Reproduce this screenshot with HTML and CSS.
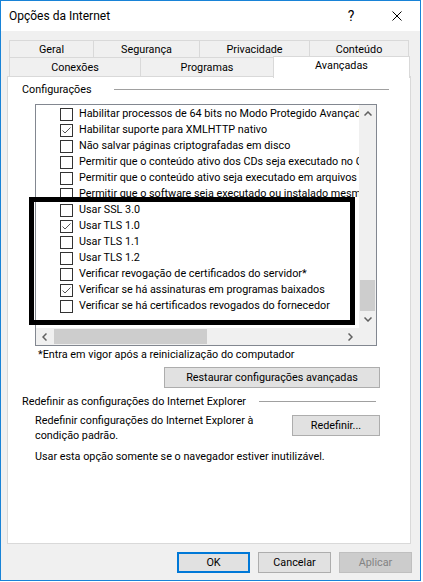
FILE: index.html
```html
<!DOCTYPE html>
<html lang="pt-BR">

<head>
  <meta charset="UTF-8" />
  <title>Opções da Internet</title>
  <link rel="stylesheet" href="styles.css">
</head>

<body>

  <div class="window">
    <!-- barra de título -->
    <div class="titlebar">
      <span class="title">Opções da Internet</span>
      <span class="title-btn help">?</span>
      <span class="title-btn">
        <svg width="10" height="10" viewBox="0 0 10 10"><path d="M0.5 0.5L9.5 9.5M9.5 0.5L0.5 9.5" stroke="#000" stroke-width="1" fill="none"/></svg>
      </span>
    </div>

    <div class="content">
      <!-- abas -->
      <div class="tabs">
        <div class="tab-row row1">
          <div class="tab tab-geral">Geral</div>
          <div class="tab tab-seguranca">Segurança</div>
          <div class="tab tab-privacidade">Privacidade</div>
          <div class="tab tab-conteudo">Conteúdo</div>
        </div>
        <div class="tab-row row2">
          <div class="tab tab-conexoes">Conexões</div>
          <div class="tab tab-programas">Programas</div>
          <div class="tab tab-avancadas active">Avançadas</div>
        </div>
      </div>

      <div class="panel">
        <div class="group-title group-config">
          <span>Configurações</span>
          <div class="group-line"></div>
        </div>

        <div class="listbox">
          <div class="list-main">
            <div class="list-items">
              <div class="item"><span class="check"></span>Habilitar processos de 64 bits no Modo Protegido Avançado*</div>
              <div class="item"><span class="check checked"><svg width="11" height="11" viewBox="0 0 11 11"><path d="M1.5 5.5L4 8L9.5 2.5" stroke="#555" stroke-width="1" fill="none"/></svg></span>Habilitar suporte para XMLHTTP nativo</div>
              <div class="item"><span class="check"></span>Não salvar páginas criptografadas em disco</div>
              <div class="item"><span class="check"></span>Permitir que o conteúdo ativo dos CDs seja executado no Computador Local*</div>
              <div class="item"><span class="check"></span>Permitir que o conteúdo ativo seja executado em arquivos do Computador Local*</div>
              <div class="item"><span class="check"></span>Permitir que o software seja executado ou instalado mesmo se a assinatura for inválida</div>
              <div class="item"><span class="check"></span>Usar SSL 3.0</div>
              <div class="item"><span class="check checked"><svg width="11" height="11" viewBox="0 0 11 11"><path d="M1.5 5.5L4 8L9.5 2.5" stroke="#555" stroke-width="1" fill="none"/></svg></span>Usar TLS 1.0</div>
              <div class="item"><span class="check"></span>Usar TLS 1.1</div>
              <div class="item"><span class="check"></span>Usar TLS 1.2</div>
              <div class="item"><span class="check"></span>Verificar revogação de certificados do servidor*</div>
              <div class="item"><span class="check checked"><svg width="11" height="11" viewBox="0 0 11 11"><path d="M1.5 5.5L4 8L9.5 2.5" stroke="#555" stroke-width="1" fill="none"/></svg></span>Verificar se há assinaturas em programas baixados</div>
              <div class="item"><span class="check"></span>Verificar se há certificados revogados do fornecedor</div>
            </div>
            <!-- barra de rolagem vertical -->
            <div class="vscroll">
              <div class="arrow-btn">
                <svg width="8" height="5" viewBox="0 0 8 5"><path d="M0.5 4.5L4 1L7.5 4.5" stroke="#606060" stroke-width="1.5" fill="none"/></svg>
              </div>
              <div class="vtrack"><div class="vthumb"></div></div>
              <div class="arrow-btn">
                <svg width="8" height="5" viewBox="0 0 8 5"><path d="M0.5 0.5L4 4L7.5 0.5" stroke="#606060" stroke-width="1.5" fill="none"/></svg>
              </div>
            </div>
          </div>
          <!-- barra de rolagem horizontal -->
          <div class="hscroll">
            <div class="hbar">
              <div class="arrow-btn">
                <svg width="5" height="8" viewBox="0 0 5 8"><path d="M4.5 0.5L1 4L4.5 7.5" stroke="#606060" stroke-width="1.5" fill="none"/></svg>
              </div>
              <div class="htrack"><div class="hthumb"></div></div>
              <div class="arrow-btn">
                <svg width="5" height="8" viewBox="0 0 5 8"><path d="M0.5 0.5L4 4L0.5 7.5" stroke="#606060" stroke-width="1.5" fill="none"/></svg>
              </div>
            </div>
            <div class="corner"></div>
          </div>
          <!-- destaque -->
          <div class="highlight"></div>
        </div>

        <div class="note">*Entra em vigor após a reinicialização do computador</div>
        <button class="btn btn-restore">Restaurar configurações avançadas</button>

        <div class="group-title group-reset">
          <span>Redefinir as configurações do Internet Explorer</span>
          <div class="group-line"></div>
        </div>
        <div class="reset-row">
          <div class="reset-text">Redefinir configurações do Internet Explorer à condição padrão.</div>
          <button class="btn btn-reset">Redefinir...</button>
        </div>
        <div class="reset-note">Usar esta opção somente se o navegador estiver inutilizável.</div>
      </div>

      <div class="footer">
        <button class="btn btn-dialog btn-ok">OK</button>
        <button class="btn btn-dialog">Cancelar</button>
        <button class="btn btn-dialog btn-disabled">Aplicar</button>
      </div>
    </div>
  </div>

</body>

</html>
```

FILE: styles.css
```css
* {
  box-sizing: border-box;
}
body {
  margin: 0;
  background: #fff;
  font-family: Roboto, "Noto Sans", sans-serif;
  font-size: 10.8px;
  color: #000;
}
.window {
  width: 421px;
  height: 581px;
  border: 1px solid #1883d7;
  background: #f0f0f0;
}

/* barra de título */
.titlebar {
  height: 30px;
  background: #fff;
  display: flex;
  align-items: center;
  padding-left: 8px;
}
.title {
  flex: 1;
  font-size: 12px;
}
.title-btn {
  width: 46px;
  height: 30px;
  display: flex;
  align-items: center;
  justify-content: center;
}
.help {
  font-size: 14px;
}

.content {
  padding: 9px 0 0 6px;
}

/* abas */
.tabs {
  margin-left: 2px;
}
.tab-row {
  display: flex;
}
.tab {
  border: 1px solid #d9d9d9;
  border-bottom: none;
  margin-left: -1px;
  text-align: center;
  background: #f0f0f0;
  white-space: nowrap;
}
.tab:first-child {
  margin-left: 0;
}
.row1 .tab {
  height: 17px;
  line-height: 18px;
}
.row2 .tab {
  height: 19px;
  line-height: 20px;
}
.row2 .tab.active {
  position: relative;
  z-index: 1;
  background: #fff;
  height: 22px;
  margin-top: -1px;
  margin-bottom: -2px;
  line-height: 18px;
}
.tab-geral { width: 85px; }
.tab-seguranca { width: 107px; }
.tab-privacidade { width: 111px; }
.tab-conteudo { width: 100px; }
.tab-conexoes { width: 132px; }
.tab-programas { width: 134px; }
.tab-avancadas { width: 137px; }

/* painel */
.panel {
  width: 404px;
  height: 468px;
  background: #fff;
  border: 1px solid #d9d9d9;
  display: flex;
  flex-direction: column;
}
.group-title {
  display: flex;
  align-items: center;
  padding-left: 14px;
  height: 15px;
  line-height: 15px;
  white-space: nowrap;
}
.group-line {
  flex: 1;
  height: 1px;
  background: #a0a0a0;
}
.group-config {
  margin-top: 5px;
}
.group-config .group-line {
  margin-left: 22px;
  margin-right: 21px;
}
.group-reset {
  margin-top: 6px;
}
.group-reset .group-line {
  margin-left: 13px;
  margin-right: 34px;
}

/* lista de opções */
.listbox {
  position: relative;
  margin-top: 7px;
  margin-left: 27px;
  width: 342px;
  height: 242px;
  border: 1px solid #828790;
  display: flex;
  flex-direction: column;
}
.list-main {
  display: flex;
  height: 223px;
}
.list-items {
  width: 323px;
  overflow: hidden;
  padding-top: 1px;
}
.item {
  height: 16px;
  line-height: 16px;
  white-space: nowrap;
  display: flex;
  align-items: center;
  padding-left: 24px;
}
.check {
  width: 13px;
  height: 13px;
  border: 1px solid #333;
  background: #fff;
  margin-right: 6px;
  flex-shrink: 0;
  display: flex;
  align-items: center;
  justify-content: center;
}
.vscroll {
  width: 17px;
  background: #f0f0f0;
  display: flex;
  flex-direction: column;
}
.arrow-btn {
  width: 17px;
  height: 17px;
  display: flex;
  align-items: center;
  justify-content: center;
  flex-shrink: 0;
}
.vtrack {
  flex: 1;
  display: flex;
  flex-direction: column;
  justify-content: flex-end;
  align-items: center;
}
.vthumb {
  width: 15px;
  height: 31px;
  background: #cdcdcd;
}
.hscroll {
  display: flex;
  height: 17px;
}
.hbar {
  width: 323px;
  display: flex;
  background: #f0f0f0;
}
.htrack {
  flex: 1;
  display: flex;
  align-items: center;
}
.hthumb {
  height: 15px;
  width: 153px;
  margin-left: 1px;
  background: #cdcdcd;
}
.corner {
  width: 17px;
  background: #f0f0f0;
}
.highlight {
  position: absolute;
  left: -7px;
  top: 92px;
  width: 326px;
  height: 128px;
  border: 5px solid #000;
}

.note {
  margin-top: 1px;
  padding-left: 30px;
  line-height: 15px;
}

/* botões */
.btn {
  font-family: inherit;
  font-size: 10.8px;
  color: #000;
  background: #e1e1e1;
  border: 1px solid #adadad;
  height: 21px;
  padding: 0;
}
.btn-restore {
  align-self: flex-end;
  width: 216px;
  margin-top: 5px;
  margin-right: 30px;
}
.reset-row {
  display: flex;
  justify-content: space-between;
  margin-top: 4px;
  padding-left: 27px;
  padding-right: 30px;
}
.reset-text {
  width: 236px;
  line-height: 15px;
}
.btn-reset {
  width: 88px;
  margin-top: 2px;
}
.reset-note {
  margin-top: 6px;
  padding-left: 27px;
  line-height: 15px;
}

.footer {
  display: flex;
  justify-content: flex-end;
  gap: 8px;
  margin-top: 8px;
  padding-right: 8px;
}
.btn-dialog {
  width: 73px;
}
.btn-ok {
  border: 2px solid #0078d7;
}
.btn-disabled {
  background: #ccc;
  border-color: #bfbfbf;
  color: #838383;
}
```
